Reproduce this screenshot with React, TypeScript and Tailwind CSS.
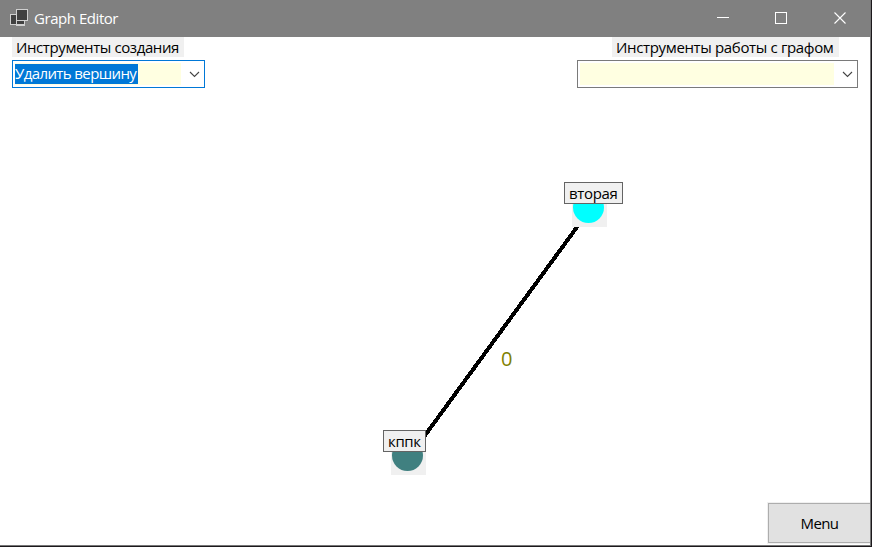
import React from "react";

function AppIcon() {
  return (
    <svg className="block" width="18" height="17" viewBox="0 0 18 17" shapeRendering="crispEdges">
      <rect x="6" y="5" width="9" height="12" fill="#d0d0d0" />
      <rect x="7" y="6" width="7" height="9" fill="#404040" />
      <rect x="0" y="5" width="7" height="11" fill="#d0d0d0" />
      <rect x="1" y="6" width="5" height="9" fill="#404040" />
      <rect x="6" y="0" width="12" height="12" fill="#d0d0d0" />
      <rect x="7" y="1" width="10" height="10" fill="#404040" />
    </svg>
  );
}

function TitleBar() {
  return (
    <header className="flex h-[37px] shrink-0 items-start bg-[#808080] text-white">
      <div className="mt-[9px] ml-[10px]">
        <AppIcon />
      </div>
      <h1 className="mt-[8px] ml-[6px] text-[15px] leading-5 tracking-[-0.45px] whitespace-nowrap">Graph Editor</h1>
      <div className="mt-[12px] mr-[24px] ml-auto flex items-center">
        <svg className="mr-[46px]" width="12" height="12" viewBox="0 0 12 12" shapeRendering="crispEdges">
          <path d="M0 5.5h12" stroke="#fff" />
        </svg>
        <svg className="mr-[47px]" width="12" height="12" viewBox="0 0 12 12" shapeRendering="crispEdges">
          <rect x="0.5" y="0.5" width="11" height="11" fill="none" stroke="#fff" />
        </svg>
        <svg width="12" height="12" viewBox="0 0 12 12">
          <path d="M0.5 0.5l11 11M11.5 0.5l-11 11" stroke="#fff" strokeWidth="1.1" />
        </svg>
      </div>
    </header>
  );
}

function Chevron() {
  return (
    <svg className="mr-[2px] ml-auto self-center" width="11" height="7" viewBox="0 0 11 7">
      <path d="M1 1l4.5 4.5L10 1" fill="none" stroke="#444" strokeWidth="1.1" />
    </svg>
  );
}

function Node({ name, color, place, size }: { name: string; color: string; place: string; size: string }) {
  return (
    <div className={`absolute ${place}`}>
      <div className={`relative z-10 flex h-[22px] items-center border border-[#646464] bg-[#f0f0f0] pl-[4px] text-[15px] leading-5 tracking-[-0.35px] whitespace-nowrap ${size}`}>
        <span>{name}</span>
      </div>
      <div className="ml-[8px] flex h-[23px] w-[35px] items-start overflow-hidden bg-[#f0f0f0]">
        <div className={`mt-[-12px] ml-[1px] h-[31px] w-[31px] shrink-0 rounded-full ${color}`} />
      </div>
    </div>
  );
}

export default function App() {
  return (
    <div className="flex h-[547px] w-[872px] flex-col overflow-hidden border-r border-b border-[#1c191c] bg-white font-['Open_Sans','Noto_Sans',sans-serif] text-black">
      <div className="relative flex flex-1 flex-col border-r border-b border-[#777]">
        <TitleBar />
        <div className="flex justify-between pr-[12px] pl-[12px]">
          <section className="flex flex-col items-start">
            <span className="h-5 w-[172px] bg-[#f0f0f0] pl-1 text-[15px] leading-[21px] tracking-[-0.4px] whitespace-nowrap">Инструменты создания</span>
            <div className="mt-[3px] flex h-[28px] w-[193px] border border-[#0078d7] p-[2px]">
              <div className="flex h-[22px] w-[166px] bg-[#ffffe1]">
                <span className="my-px h-5 w-[123px] bg-[#0078d7] text-[15px] leading-[19px] tracking-[-0.6px] whitespace-nowrap text-white">Удалить вершину</span>
              </div>
              <Chevron />
            </div>
          </section>
          <section className="flex flex-col items-end">
            <span className="mr-[19px] h-5 w-[227px] bg-[#f0f0f0] pl-1 text-[15px] leading-[21px] tracking-[-0.35px] whitespace-nowrap">Инструменты работы с графом</span>
            <div className="mt-[3px] flex h-[28px] w-[281px] border border-[#7a7a7a] p-[2px]">
              <div className="h-[22px] w-[254px] bg-[#ffffe1]" />
              <Chevron />
            </div>
          </section>
        </div>
        <svg className="absolute top-0 left-0" width="870" height="500" viewBox="0 0 870 500" shapeRendering="crispEdges">
          <path d="M588 212L407 460" stroke="#000" strokeWidth="4" />
        </svg>
        <span className="absolute top-[347px] left-[501px] text-[20px] leading-6 text-[#808000]">0</span>
        <Node name="вторая" color="bg-[#00ffff]" place="top-[182px] left-[564px]" size="w-[59px]" />
        <Node name="кппк" color="bg-[#408080]" place="top-[430px] left-[383px]" size="w-[43px]" />
        <button className="mt-auto mb-px ml-auto h-[42px] w-[103px] border border-r-0 border-[#f0f0f0] text-[15px] tracking-[-0.6px]">
          <span className="flex h-full items-center justify-center border border-r-0 border-[#adadad] bg-[#e1e1e1]">Menu</span>
        </button>
      </div>
    </div>
  );
}
